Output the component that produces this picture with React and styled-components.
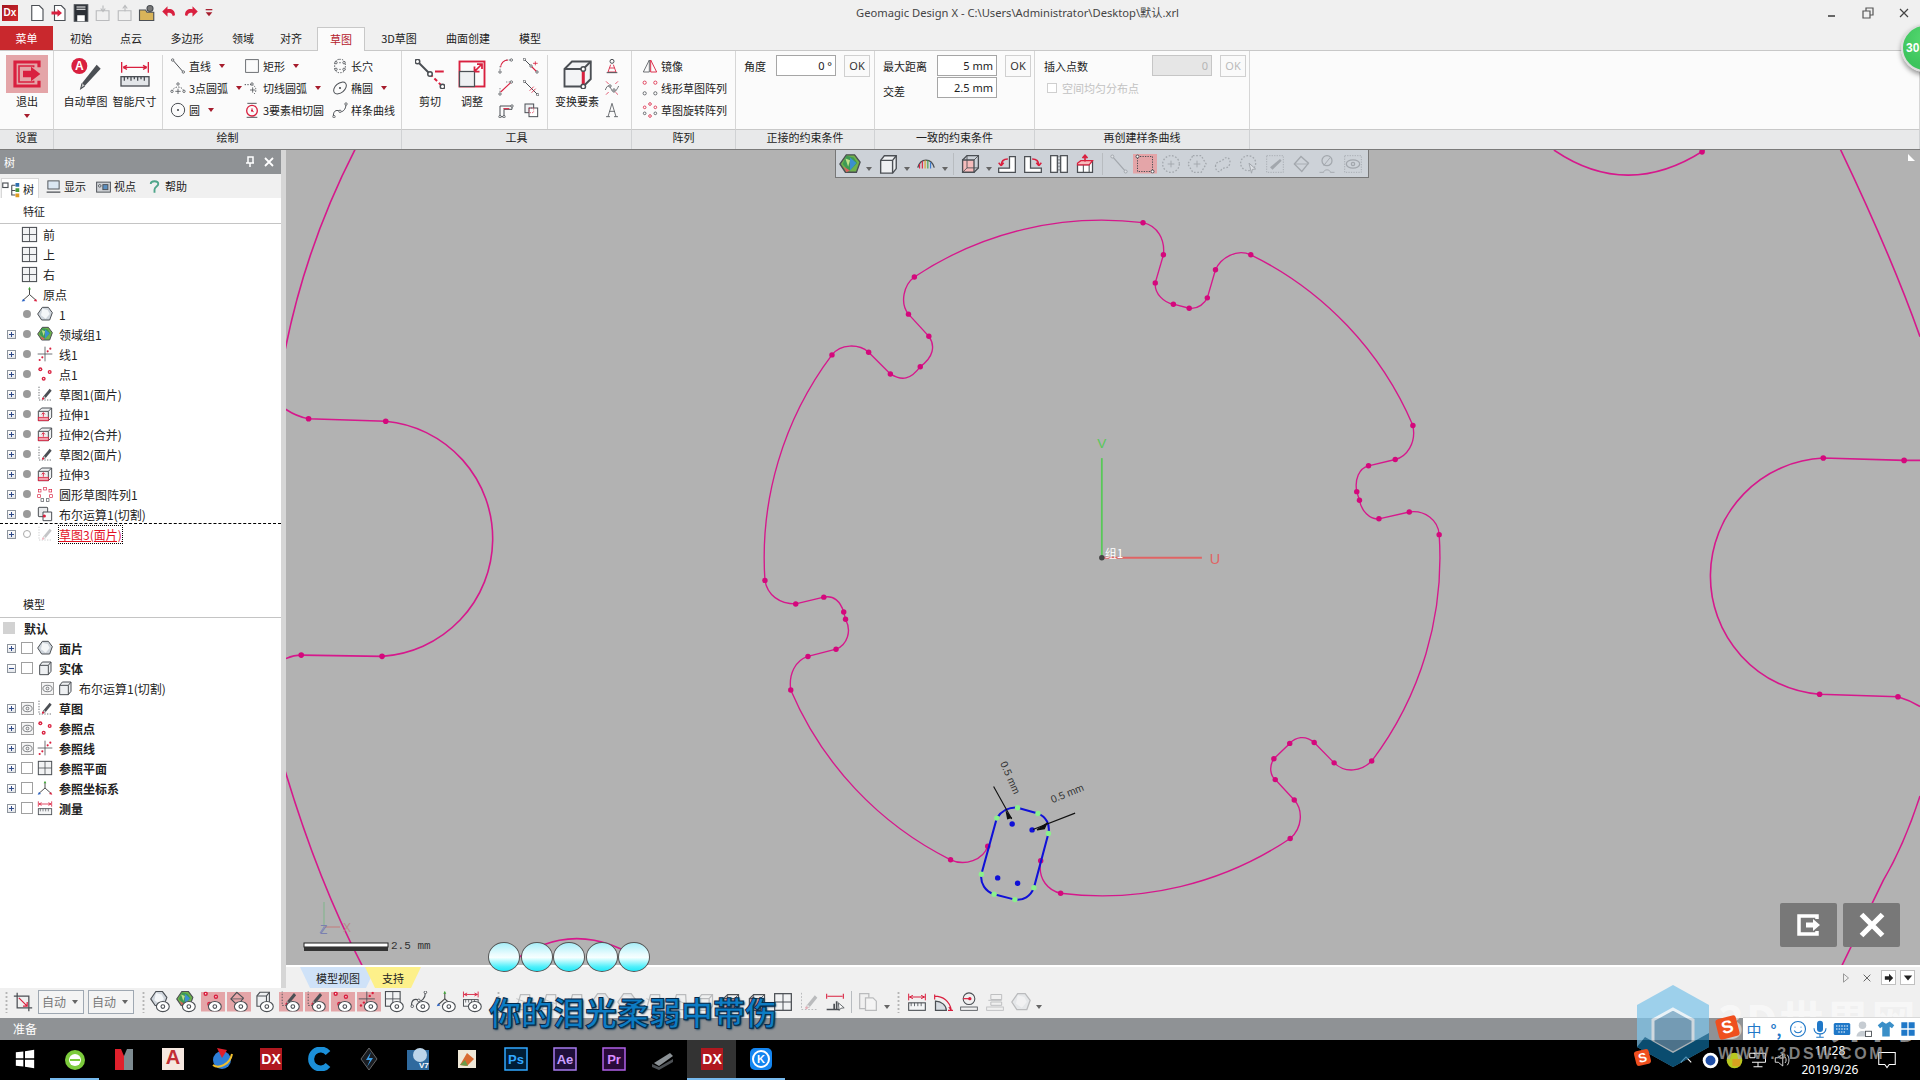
import React from 'react';
import styled, { createGlobalStyle } from 'styled-components';

const D = '#4b4f54';
const R = '#d9203f';
const PINK = '#d6188c';

const Global = createGlobalStyle`
  html, body { margin: 0; padding: 0; background: #f0f0f0; overflow: hidden; }
  body { font-family: "Noto Sans CJK SC", "Noto Sans", sans-serif; font-size: 12px; color: #222; }
  * { box-sizing: border-box; }
`;

const Window = styled.div`
  position: relative;
  width: 1920px;
  height: 1080px;
  display: flex;
  flex-direction: column;
  overflow: hidden;
  background: #f0f0f0;
`;

/* ---------- icons ---------- */
const Glyph = styled.svg`
  display: block;
  flex: none;
  width: ${p => p.$size}px;
  height: ${p => p.$size}px;
  fill: none;
  stroke: ${D};
  stroke-width: 1.5;
  opacity: ${p => (p.$dim ? 0.32 : 1)};
`;

const Node = ({ x, y, c = D, r = 1.8 }) => <circle cx={x} cy={y} r={r} fill="#fff" stroke={c} strokeWidth="1.2" />;
const Dot = ({ x, y, c = R, r = 1.6 }) => <circle cx={x} cy={y} r={r} fill={c} stroke="none" />;
const S = ({ d, c = R, w = 1.6, dash }) => <path d={d} stroke={c} strokeWidth={w} strokeDasharray={dash} fill="none" />;

const cube = (
  <>
    <path d="M4 8L8 3H21V17L17 22H4Z" fill="#eef0f2" />
    <path d="M4 8H17V22M17 8L21 3" />
  </>
);
const pencil = (
  <>
    <path d="M10 15L19 4L22 7L13 18Z" fill={D} stroke="none" />
    <path d="M10 15L9 19L13 18" fill="#ddd" strokeWidth="1" />
    <Dot x={9} y={19} />
  </>
);

const ICONS = {
  exit: (
    <>
      <path d="M21 7V3H3V21H21V17" stroke={R} strokeWidth="2.4" />
      <path d="M17 7V6H6V18H17V17" stroke={R} strokeWidth="1.2" />
      <path d="M9 9.5H15V6.5L22 12L15 17.5V14.5H9Z" fill={R} stroke="none" />
    </>
  ),
  autoSketch: (
    <>
      <path d="M9 19L20 5L23 8L11 21Z" fill={D} stroke="none" />
      <path d="M9 19L8 23L11 21" fill="#ccc" strokeWidth=".8" />
      <circle cx="7" cy="6" r="6" fill={R} stroke="none" />
      <text x="7" y="9" fontSize="9" fontWeight="700" fontFamily="Liberation Sans" textAnchor="middle" fill="#fff" stroke="none">A</text>
    </>
  ),
  smartDim: (
    <>
      <S d="M2 3V11M22 3V11M3 7H21M3 7L6 5.5M3 7L6 8.5M21 7L18 5.5M21 7L18 8.5" w={1} />
      <rect x="1.5" y="14" width="21" height="7" fill="#e3e6e9" strokeWidth="1" />
      <path d="M4 14V17M6.500 14V16M9 14V17M11.500 14V16M14 14V17M16.500 14V16M19 14V17" strokeWidth="1" />
    </>
  ),
  line: (<><path d="M5 4L19 20" /><Node x={4} y={3} /><Node x={20} y={21} /></>),
  arc3: (
    <>
      <path d="M3 17A9.500 9.500 0 0 1 21 17" strokeDasharray="2 2" />
      <path d="M12 13V21M8 17H16" strokeWidth="1.2" />
      <Node x={3} y={17} /><Node x={21} y={17} /><Node x={12} y={6} />
    </>
  ),
  circle: (<><circle cx="12" cy="12" r="10" /><Dot x={12} y={12} c={D} /></>),
  rect: <rect x="2.500" y="2.500" width="19" height="19" strokeWidth="1.2" />,
  tanArc: (
    <>
      <path d="M1 7H11" strokeDasharray="2 2" />
      <path d="M11 7A8 8 0 0 1 15 21" strokeDasharray="2 2" />
      <path d="M13 11V19M9 15H17" strokeWidth="1.2" />
      <Node x={12} y={6} />
    </>
  ),
  circle3: (
    <>
      <circle cx="12" cy="13" r="8" stroke={R} strokeWidth="2" />
      <path d="M5 2H19M4 23H20" strokeWidth="1.4" />
      <Dot x={12} y={13} />
      <path d="M12 9V13L15 15" stroke={R} strokeWidth="1" />
    </>
  ),
  slot: (
    <>
      <rect x="4" y="2" width="16" height="20" rx="7" strokeDasharray="2 2" />
      <Node x={6} y={7} /><Node x={18} y={7} /><Node x={6} y={17} /><Node x={18} y={17} />
      <Dot x={12} y={7} c={D} r={1} /><Dot x={12} y={17} c={D} r={1} />
    </>
  ),
  ellipse: (<><ellipse cx="12" cy="12" rx="11" ry="7" transform="rotate(-40 12 12)" /><Dot x={12} y={12} c={D} /></>),
  spline: (
    <>
      <path d="M2 21C2 11 9 12 12 14S21 12 21 3" />
      <Node x={3} y={22} /><Node x={12} y={14} /><Node x={21} y={3} />
    </>
  ),
  trim: (
    <>
      <path d="M3 3L12 12" /><S d="M12 12L21 21" dash="3 2" />
      <Node x={2} y={2} /><Node x={12} y={12} /><Node x={22} y={22} />
      <S d="M16 10H23" />
    </>
  ),
  adjust: (
    <>
      <rect x="2" y="2" width="20" height="20" stroke={R} />
      <rect x="2" y="10" width="12" height="12" fill="#eef0f2" strokeWidth="1" />
      <S d="M14 10L20 4M16 4H20V8M14 10V6M14 10H18" w={1.4} />
    </>
  ),
  fillet: (<><path d="M3 22V12M12 3H21" strokeDasharray="2 2" strokeWidth="1" /><S d="M4 14A11 11 0 0 1 15 3" /><Node x={3} y={21} /><Node x={20} y={3} /></>),
  chamfer: (<><path d="M3 22V12M12 3H21" strokeDasharray="2 2" strokeWidth="1" /><S d="M4 18L19 4" /><Node x={3} y={21} /><Node x={20} y={3} /></>),
  extendLine: (<><path d="M3 3L12 12" /><S d="M12 12L21 21" /><S d="M15 8H22M18.500 5V11" w={1.2} /><Node x={2} y={2} /><Node x={12} y={12} /><Node x={21} y={21} /></>),
  splitLine: (<><path d="M3 3L21 21" /><S d="M10 16L16 10M13 19L19 13" w={1.3} /><Node x={2} y={2} /><Node x={22} y={22} /></>),
  offset: (<><path d="M3 6H21V11H9V22H3Z" /><S d="M8 10H17" /><Node x={21} y={6} /><Node x={9} y={22} /><Node x={3} y={22} /></>),
  overlap: (<><rect x="3" y="3" width="13" height="13" fill="#eef0f2" /><rect x="9" y="9" width="13" height="13" fill="#fff" /><path d="M9 9H16V16H9Z" stroke={R} strokeDasharray="1.500 1.500" strokeWidth="1" /></>),
  transform: (
    <>
      <path d="M2 8L8 2H23V16L17 22H2Z" fill="#f3f4f6" />
      <path d="M2 8H17V22M17 8L23 2" />
      <S d="M17 8V22" w={2.4} />
      <Node x={17} y={8} /><Node x={17} y={22} />
    </>
  ),
  dimPoint: (<><circle cx="12" cy="5" r="3" /><S d="M8 15H16M10 10L6 21H18L14 10" w={1.3} /><path d="M4 22H20" /></>),
  dimFit: (<><path d="M2 15C5 7 8 7 11 14S17 19 22 9" strokeWidth="1.2" /><Node x={9} y={9} /><Node x={15} y={15} /><S d="M3 2L7 6M21 2L17 6M3 22L7 18M21 22L17 18" w={1.1} /></>),
  text: <path d="M3 22H9M15 22H21M6 22L12 2L18 22M8 14H16" strokeWidth="1.2" />,
  mirror: (<><path d="M11 3L2 21H11Z" strokeWidth="1.2" /><path d="M13 3L22 21H13Z" stroke={R} strokeWidth="1.4" /></>),
  linPattern: (<><Node x={4} y={4} c={R} r={2.4} /><Node x={20} y={4} c={R} r={2.4} /><Node x={4} y={20} r={2.4} /><Node x={20} y={20} r={2.4} /></>),
  rotPattern: (<><Node x={12} y={3} c={R} r={2} /><Node x={20} y={8} c={R} r={2} /><Node x={20} y={17} r={2} /><Node x={12} y={21} c={R} r={2} /><Node x={4} y={17} r={2} /><Node x={4} y={8} c={R} r={2} /></>),
  mesh: (<><path d="M8 2H17L23 10L19 21H7L1 12Z" fill="#cfd5dc" /><path d="M8 4L16 6L19 12L13 19L6 14Z" fill="#f4f6f8" stroke="none" /></>),
  region: (
    <>
      <path d="M8 2H17L23 10L19 21H7L1 12Z" fill="#6fb24b" />
      <path d="M8 3L16 5L20 11L11 20L4 12Z" fill="#3f9a55" stroke="none" />
      <path d="M12 5L19 11L12 19Z" fill="#3c8fd0" stroke="none" />
      <path d="M5 15L12 19L8 21Z" fill="#d9605f" stroke="none" />
      <path d="M7 6L12 8L10 15Z" fill="#bfe08a" stroke="none" />
    </>
  ),
  refLine: (<><path d="M12 1V23M1 12H23" strokeWidth="1.2" /><Dot x={4} y={21} /><Dot x={8} y={17} /><Dot x={16} y={8} /><Dot x={20} y={4} /></>),
  refPoint: (<><circle cx="5" cy="5" r="3" fill={R} stroke="none" /><circle cx="19" cy="9" r="3" fill={R} stroke="none" /><circle cx="10" cy="19" r="3" fill={R} stroke="none" /><Dot x={5} y={5} c="#fff" r={1} /><Dot x={19} y={9} c="#fff" r={1} /><Dot x={10} y={19} c="#fff" r={1} /></>),
  sketch: (<><path d="M3 1V21H23" strokeDasharray="2 2" strokeWidth="1.2" />{pencil}</>),
  extrude: (
    <>
      <path d="M2 8L7 3H22V17L17 22H2Z" fill="#eef0f2" />
      <path d="M2 8H17V22M17 8L22 3" />
      <rect x="2" y="17" width="15" height="5" fill="#f0a0ae" stroke={R} strokeWidth="1.200" />
      <S d="M9.500 16V10M7 12.500L9.500 10L12 12.500" w={1.4} />
    </>
  ),
  pattern: (<><rect x="10" y="2" width="4" height="4" stroke={R} strokeWidth="1" /><rect x="18" y="5" width="4" height="4" stroke={R} strokeWidth="1" /><rect x="2" y="5" width="4" height="4" stroke={R} strokeWidth="1" /><rect x="1" y="13" width="4" height="4" stroke={R} strokeWidth="1" /><rect x="19" y="13" width="4" height="4" stroke={R} strokeWidth="1" /><rect x="6" y="19" width="4" height="4" strokeWidth="1" /><rect x="14" y="19" width="4" height="4" strokeWidth="1" /></>),
  boolean: (<><rect x="2" y="2" width="14" height="14" rx="1" fill="#e8eaec" /><path d="M9 9H22V22H9Z" fill="#f6f7f8" /><Dot x={11} y={15} r={2.400} /></>),
  solid: cube,
  plane: (<><rect x="2" y="2" width="20" height="20" fill="#f2f3f4" /><path d="M12 2V22M2 12H22" strokeWidth="1.2" /></>),
  origin: (
    <>
      <S d="M12 12V4" c="#444" w={1.4} /><S d="M12 12L3 20" c="#444" w={1.4} /><S d="M12 12L21 20" c="#444" w={1.4} />
      <path d="M12 1L10 5H14Z" fill="#3fa535" stroke="none" />
      <path d="M1 22L6 21L3 18Z" fill="#2a62c4" stroke="none" />
      <path d="M23 22L18 21L21 18Z" fill={R} stroke="none" />
    </>
  ),
  measure: (
    <>
      <S d="M2 2V10M22 2V10M3 6H21M3 6L7 4M3 6L7 8M21 6L17 4M21 6L17 8" w={1.2} />
      <rect x="2" y="13" width="20" height="9" fill="#f4f5f6" strokeWidth="1.300" />
      <path d="M5 13V17M9 13V17M13 13V17M17 13V17" strokeWidth="1" />
    </>
  ),
  measureAngle: (<><S d="M2 3V9M2 5C12 5 20 11 22 22M18 22H24M22 22L19 18" w={1.4} /><path d="M3 11V22H16C16 16 10 11 3 11Z" fill="#d7dce2" /></>),
  measureDev: (<><circle cx="12" cy="8" r="7" strokeWidth="1.300" /><S d="M5 8H12" w={1.4} /><Dot x={13} y={8} r={2} /><rect x="2" y="18" width="20" height="4" strokeWidth="1" /></>),
  measureSec: (<><path d="M7 3H20V9H7ZM4 10H20M7 12H20V16H7Z" strokeWidth="1.100" /><rect x="2" y="18" width="20" height="4" strokeWidth="1" /></>),
  pasteDoc: (<><path d="M2 2H13V20H2Z" /><path d="M9 7H18L22 11V22H9Z" fill="#fff" /></>),
  dimCursor: (<><S d="M2 2V8M22 2V8M3 5H21" w={1.3} /><path d="M2 21H18M11 21V14M14 21V11" strokeWidth="2" /><path d="M16 13L23 19L19 19.500L17 22Z" fill="#fff" strokeWidth="1" /></>),
  revolve: (<><path d="M3 16C6 5 18 5 21 16" /><path d="M5 17V12M8 17V9" stroke={R} strokeWidth="1.200" /><path d="M11 17V8" stroke="#e0a020" strokeWidth="1.200" /><path d="M14 17V8" stroke="#45a545" strokeWidth="1.200" /><path d="M17 17V10" stroke="#3a7ad0" strokeWidth="1.200" /></>),
  frontBox: (<><path d="M3 8L8 3H21V17L16 22H3Z" /><path d="M3 8H16V22H3Z" fill="#f6bcbc" /><path d="M16 8L21 3M8 3V17H21M8 17L3 22" strokeWidth="1" /></>),
  rotL: (<><path d="M2 22V17H15V3H22V22Z" fill="#fff" /><S d="M5 14C5 8 9 6 13 6M5 14L2 10.500M5 14L8 10.500" w={1.8} /></>),
  rotR: (<><path d="M2 3H9V17H22V22H2Z" fill="#fff" /><S d="M19 14C19 8 15 6 11 6M19 14L16 10.500M19 14L22 10.500" w={1.800} /></>),
  split: (<><rect x="2" y="2" width="8" height="20" fill="#fff" /><rect x="14" y="2" width="8" height="20" fill="#fff" /><path d="M12 2V22" strokeDasharray="2 2" strokeWidth="1" /></>),
  lift: (<><path d="M3 13L7 9H21V22H3Z" fill="#fff" /><path d="M3 13H17V22M10 13V22" strokeWidth="1.200" /><path d="M3 11L7 8H21L17 13H3Z" fill="#f6bcbc" stroke={R} /><path d="M12 9V2M9 5L12 1.500L15 5" stroke={R} strokeWidth="2" /></>),
  dashRect: (<><rect x="3" y="3" width="18" height="18" strokeDasharray="1.500 1.500" strokeWidth="1.200" /><Node x={3} y={3} /><Node x={21} y={21} /></>),
  dashCircle: (<><circle cx="12" cy="12" r="10" strokeDasharray="2 2" /><path d="M12 8V16M8 12H16" strokeWidth="1.100" /></>),
  dashHex: (<><path d="M7 2H17L23 12L17 22H7L1 12Z" strokeDasharray="2 2" /><path d="M12 8V16M8 12H16" strokeWidth="1.100" /></>),
  dashBlob: (<path d="M3 15C3 8 10 10 13 6S22 5 20 12S12 15 10 19S3 21 3 15Z" strokeDasharray="2 2" />),
  dashCursor: (<><circle cx="11" cy="11" r="9" strokeDasharray="2 2" /><path d="M12 11L20 18L16 18.500L15 23Z" fill="#fff" strokeWidth="1.200" /></>),
  dashPen: (<><rect x="2" y="2" width="20" height="20" strokeDasharray="1.500 1.500" strokeWidth="1" /><path d="M6 16L18 6L20 8L9 19Z" fill={D} stroke="none" /></>),
  bucket: (<><path d="M4 12L12 3L21 11L13 21Z" /><path d="M4 12H21" strokeWidth="1" /></>),
  person: (<><circle cx="12" cy="8" r="6" /><path d="M3 22H8C8 18 16 18 16 22H21M8 14L16 4" strokeWidth="1.100" /></>),
  eyeBox: (<><rect x="2" y="2" width="20" height="20" strokeDasharray="1.500 1.500" strokeWidth="1" /><ellipse cx="12" cy="12" rx="8" ry="5" /><circle cx="12" cy="12" r="2" /></>),
  cropTool: (<><path d="M5 1V19H23M1 5H19V23" strokeWidth="1.500" /><S d="M7 7L17 17M17 12V17H12" w={1.500} /></>),
  cap: (<><path d="M4 21L9 3H20L21 21Z" /><path d="M4 8L20 14" strokeWidth="1" /></>),
};

const Icon = ({ name, size = 16, dim }) => (
  <Glyph viewBox="0 0 24 24" $size={size} $dim={dim}>{ICONS[name]}</Glyph>
);

// a base icon with the small eye that the visibility buttons carry
const VisIcon = ({ name, size = 22, dim }) => (
  <Glyph viewBox="0 0 24 24" $size={size} $dim={dim}>
    <g transform="translate(0 -1) scale(.8)">{ICONS[name]}</g>
    <ellipse cx="14" cy="17" rx="7" ry="5.500" fill="#fff" strokeWidth="1.200" />
    <circle cx="14" cy="17" r="2" strokeWidth="1.200" />
  </Glyph>
);

const Caret = styled.i`
  display: inline-block;
  flex: none;
  width: 0;
  height: 0;
  border-left: 3.5px solid transparent;
  border-right: 3.5px solid transparent;
  border-top: 4px solid ${p => p.$grey ? '#666' : '#a61c2c'};
`;

/* ---------- title bar ---------- */
const TitleBar = styled.div`
  height: 26px;
  display: flex;
  align-items: center;
`;
const DxLogo = styled.div`
  width: 16px;
  height: 16px;
  margin: 0 8px 0 2px;
  background: linear-gradient(135deg, #a3161f, #d42a2f);
  color: #fff;
  font: 700 10px "Liberation Sans", sans-serif;
  line-height: 16px;
  text-align: center;
`;
const QatSlot = styled.div`
  width: ${p => p.$w || 22}px;
  display: flex;
  justify-content: center;
  align-items: center;
`;
const Title = styled.div`
  margin-left: 640px;
  padding-bottom: 3px;
  font: 11.2px "Noto Sans", "Noto Sans CJK SC", sans-serif;
  color: #444;
  white-space: nowrap;
`;
const WinButtons = styled.div`
  margin-left: auto;
  display: flex;
  align-items: flex-start;
  padding-right: 10px;
  gap: 24px;
`;

/* ---------- tabs ---------- */
const TabRow = styled.div`
  height: 25px;
  display: flex;
  align-items: stretch;
  border-bottom: 1px solid #c8c8c8;
  font-size: 11px;
`;
const MenuTab = styled.div`
  width: 53px;
  background: #c9282d;
  color: #fff;
  display: flex;
  align-items: center;
  justify-content: center;
  padding-bottom: 1px;
`;
const Tab = styled.div`
  width: ${p => p.$w}px;
  display: flex;
  align-items: center;
  justify-content: center;
  white-space: nowrap;
  padding-bottom: 1px;
  ${p => p.$active && `
    color: #b4202c;
    background: #fbfbfb;
    border: 1px solid #c8c8c8;
    border-bottom: 0;
    margin-top: 1px;
    margin-bottom: -1px;
    padding-bottom: 2px;
  `}
`;

/* ---------- ribbon ---------- */
const Ribbon = styled.div`
  height: 98px;
  display: flex;
  font-size: 11px;
`;
const Group = styled.div`
  width: ${p => p.$w}px;
  flex: ${p => (p.$w ? 'none' : 1)};
  display: flex;
  flex-direction: column;
`;
const GroupBody = styled.div`
  height: 79px;
  background: #fbfbfb;
  border-bottom: 1px solid #c8c8c8;
  border-right: 1px solid #d6d6d6;
  padding-top: 4px;
  display: ${p => (p.$form ? 'block' : 'flex')};
  padding-left: ${p => p.$pad || 0}px;
`;
const GroupLabel = styled.div`
  height: 19px;
  background: #e8e9ea;
  border-right: 1px solid #d0d2d4;
  text-align: center;
  line-height: 14px;
  white-space: nowrap;
`;
const BigButton = styled.div`
  width: ${p => p.$w}px;
  flex: none;
  display: flex;
  flex-direction: column;
  align-items: center;
  white-space: nowrap;
`;
const BigIconBox = styled.div`
  width: ${p => p.$box || 42}px;
  height: 38px;
  display: flex;
  align-items: center;
  justify-content: center;
  background: ${p => (p.$on ? '#e4a5a8' : 'transparent')};
  margin-bottom: 1px;
`;
const BigLabel = styled.div`
  line-height: 14px;
`;
const SmallCol = styled.div`
  width: ${p => p.$w}px;
  flex: none;
  display: flex;
  flex-direction: column;
`;
const SmallRow = styled.div`
  height: 22px;
  display: flex;
  align-items: center;
  gap: 3px;
  white-space: nowrap;
`;
const CaretGap = styled.i`
  display: block;
  width: 2px;
`;
const VSep = styled.div`
  width: 1px;
  height: 74px;
  flex: none;
  background: #d6d6d6;
  margin: 0 ${p => p.$mr || 7}px 0 ${p => p.$ml || 3}px;
`;
const IconGrid = styled.div`
  width: 50px;
  flex: none;
  display: grid;
  grid-template-columns: 25px 25px;
  grid-auto-rows: 22px;
  place-items: center;
`;
const FormRow = styled.div`
  display: flex;
  align-items: flex-start;
  height: 22px;
`;
const FormLabel = styled.div`
  width: ${p => p.$w}px;
  flex: none;
  line-height: ${p => p.$lh || 22}px;
`;
const ValueBox = styled.div`
  width: 60px;
  height: 21px;
  flex: none;
  border: 1px solid ${p => (p.$off ? '#c6c6c6' : '#a6a6a6')};
  background: ${p => (p.$off ? '#e6e6e6' : '#fff')};
  color: ${p => (p.$off ? '#b5b5b5' : '#222')};
  text-align: right;
  padding-right: 3px;
  line-height: 19px;
  font-family: "Noto Sans", sans-serif;
`;
const OkButton = styled.div`
  width: 26px;
  height: 22px;
  margin-left: 8px;
  flex: none;
  border: 1px solid #d0d0d0;
  background: #fafafa;
  color: ${p => (p.$off ? '#bbb' : '#333')};
  text-align: center;
  line-height: 19px;
  font-family: "Noto Sans", sans-serif;
`;
const CheckLine = styled.div`
  display: flex;
  align-items: center;
  gap: 5px;
  color: #c2c2c2;
  margin: 3px 0 0 3px;
`;
const CheckBox = styled.i`
  display: block;
  flex: none;
  width: ${p => p.$s || 10}px;
  height: ${p => p.$s || 10}px;
  background: #fff;
  border: 1px solid ${p => p.$c || '#cfcfcf'};
`;

/* ---------- tree panel ---------- */
const Main = styled.div`
  height: 839px;
  display: flex;
  border-top: 1px solid #7a7a7a;
`;
const TreePanel = styled.div`
  width: 286px;
  flex: none;
  background: #fff;
  border-right: 5px solid #d6d6d6;
  display: flex;
  flex-direction: column;
`;
const PanelHead = styled.div`
  height: 24px;
  background: #8f9295;
  color: #fff;
  display: flex;
  align-items: center;
  padding: 0 6px 0 4px;
  font-size: 11px;
`;
const PanelTabs = styled.div`
  height: 24px;
  background: #f0f0f0;
  display: flex;
  align-items: flex-end;
  font-size: 11px;
`;
const PanelTab = styled.div`
  height: ${p => (p.$active ? 20 : 24)}px;
  width: ${p => p.$w}px;
  margin-left: ${p => p.$ml || 0}px;
  flex: none;
  display: flex;
  align-items: center;
  gap: 3px;
  ${p => p.$active && 'background:#fff;border:1px solid #d8d8d8;border-bottom:0;'}
`;
const SectionHead = styled.div`
  height: ${p => p.$h || 27}px;
  margin-top: ${p => p.$mt || 0}px;
  border-bottom: 1px solid #c4c4c4;
  padding-left: 23px;
  line-height: 27px;
  font-size: 11px;
`;
const TreeRow = styled.div`
  height: 20px;
  display: flex;
  align-items: center;
  padding-left: ${p => p.$pad}px;
  font-weight: ${p => (p.$bold ? 700 : 400)};
  white-space: nowrap;
  ${p => p.$dashed && 'height:21px;margin-top:-1px;border-top:1px dashed #000;'}
`;
const Slot = styled.div`
  width: ${p => p.$w}px;
  flex: none;
  display: flex;
  align-items: center;
  justify-content: center;
`;
const Expander = styled.i`
  display: block;
  position: relative;
  width: 9px;
  height: 9px;
  border: 1px solid #8d949c;
  background: linear-gradient(#fff, #e4e6ea);
  &::before { content: ""; position: absolute; left: 1px; right: 1px; top: 3px; height: 1px; background: #2f4a8a; }
  ${p => !p.$open && '&::after { content: ""; position: absolute; top: 1px; bottom: 1px; left: 3px; width: 1px; background: #2f4a8a; }'}
`;
const StateDot = styled.i`
  display: block;
  width: 8px;
  height: 8px;
  border-radius: 50%;
  background: ${p => (p.$off ? 'transparent' : '#9a9a9a')};
  ${p => p.$off && 'border: 1.5px solid #aaa;'}
`;
const RowLabel = styled.span`
  margin-left: 4px;
  ${p => p.$selected && 'color:#e3101f;text-decoration:underline;outline:1px dotted #000;'}
`;
const DefaultSwatch = styled.i`
  display: block;
  width: 12px;
  height: 12px;
  margin: 0 9px 0 3px;
  background: #d2d2d2;
`;
const EyeBoxWrap = styled.div`
  width: 13px;
  height: 13px;
  border: 1px solid #a0a0a0;
  background: #f4f4f4;
  display: flex;
  align-items: center;
  justify-content: center;
`;

const EyeBox = () => (
  <EyeBoxWrap>
    <Glyph viewBox="0 0 24 24" $size={11}>
      <ellipse cx="12" cy="12" rx="10" ry="7" />
      <circle cx="12" cy="12" r="3" />
    </Glyph>
  </EyeBoxWrap>
);

/* ---------- canvas ---------- */
const RightColumn = styled.div`
  flex: 1;
  display: flex;
  flex-direction: column;
  min-width: 0;
`;
const Canvas = styled.div`
  position: relative;
  flex: 1;
  background: #b2b2b2;
  border-bottom: 2px solid #fff;
`;
const Drawing = styled.svg`
  display: block;
  width: 100%;
  height: 100%;
  fill: none;
`;
const ViewBar = styled.div`
  position: absolute;
  left: 549px;
  top: 0;
  width: 534px;
  height: 28px;
  display: flex;
  align-items: center;
  background: #cdd2d8;
  border: 1px solid #777;
  border-top: 0;
`;
const ToolSlot = styled.div`
  width: ${p => p.$w || 26}px;
  height: ${p => p.$h || 20}px;
  flex: none;
  display: flex;
  align-items: ${p => (p.$low ? 'flex-end' : 'center')};
  justify-content: center;
  padding-bottom: ${p => (p.$low ? 3 : 0)}px;
  box-shadow: ${p => (p.$on ? 'inset 0 0 0 20px #e4a5a8' : 'none')};
  clip-path: ${p => (p.$on ? 'inset(0 1px)' : 'none')};
`;
const ToolSep = styled.div`
  width: ${p => p.$w || 8}px;
  height: 22px;
  flex: none;
  background: linear-gradient(#b8bcc0, #b8bcc0) center / 1px 100% no-repeat;
`;
const Grip = styled.div`
  width: ${p => p.$w || 12}px;
  height: 22px;
  flex: none;
  background: radial-gradient(circle, #b5b5b5 1px, transparent 1.2px) center top / 3px 4px repeat-y;
`;
const CornerMark = styled.i`
  position: absolute;
  right: 5px;
  top: 4px;
  width: 0;
  height: 0;
  border-bottom: 7px solid #fff;
  border-left: 7px solid transparent;
  transform: scaleX(-1);
`;
const ExitGroup = styled.div`
  position: absolute;
  right: 20px;
  bottom: 18px;
  display: flex;
  gap: 6px;
`;
const ExitButton = styled.div`
  width: 57px;
  height: 44px;
  border-radius: 2px;
  background: #787878;
  display: flex;
  align-items: center;
  justify-content: center;
`;
const Bubbles = styled.div`
  position: absolute;
  left: 202px;
  top: 792px;
  display: flex;
  gap: 0.6px;
`;
const Bubble = styled.i`
  display: block;
  width: 32px;
  height: 30px;
  border-radius: 50%;
  border: 1px solid #555;
  background: linear-gradient(#a8eef8, #eafcfe 40%, #f6ffff 52%, #4ef0fb 85%, #22e8f8);
`;

/* ---------- view tabs strip ---------- */
const ViewStrip = styled.div`
  height: 21px;
  flex: none;
  display: flex;
  align-items: stretch;
  padding-left: 14px;
  font-size: 11px;
`;
const ViewTab = styled.div`
  width: ${p => p.$w}px;
  flex: none;
  display: flex;
  align-items: center;
  justify-content: center;
  background: ${p => p.$bg};
  clip-path: polygon(0 0, 100% 0, calc(100% - 10px) 100%, 10px 100%);
  margin-left: ${p => p.$ml || 0}px;
`;
const StripRight = styled.div`
  margin-left: auto;
  display: flex;
  align-items: center;
  gap: 4px;
  padding-right: 5px;
`;
const StripBox = styled.div`
  width: 15px;
  height: 15px;
  background: #fff;
  border: 1px solid #c0c0c0;
  display: flex;
  align-items: center;
  justify-content: center;
  color: #222;
  font-size: 10px;
  line-height: 1;
`;

/* ---------- bottom bars ---------- */
const BottomBar = styled.div`
  height: 30px;
  flex: none;
  display: flex;
  align-items: center;
  background: #f0f0f0;
  padding-bottom: 3px;
`;
const Combo = styled.div`
  width: 46px;
  height: 24px;
  margin-left: 4px;
  flex: none;
  border: 1px solid #9fa8b2;
  background: #f4f4f4;
  color: #777;
  display: flex;
  align-items: center;
  justify-content: space-between;
  padding: 0 5px 0 3px;
`;
const StatusBar = styled.div`
  height: 22px;
  flex: none;
  background: #8f9295;
  color: #fff;
  padding-left: 13px;
  line-height: 22px;
`;
const Taskbar = styled.div`
  height: 40px;
  flex: none;
  background: #000;
  display: flex;
`;
const TaskSlot = styled.div`
  width: ${p => p.$w || 49}px;
  flex: none;
  display: flex;
  align-items: center;
  justify-content: center;
  background: ${p => (p.$active ? '#333' : 'transparent')};
  border-bottom: 2px solid ${p => (p.$run ? '#76b9ed' : 'transparent')};
`;
const TaskIcon = styled.svg`
  display: block;
  width: 24px;
  height: 24px;
`;
const Tray = styled.div`
  margin-left: auto;
  width: 289px;
  display: flex;
  align-items: center;
  color: #fff;
`;
const TrayCell = styled.div`
  width: ${p => p.$w || 24}px;
  flex: none;
  display: flex;
  align-items: center;
  justify-content: center;
`;
const Clock = styled.div`
  width: 72px;
  flex: none;
  text-align: center;
  line-height: 19px;
  font-family: "Noto Sans", sans-serif;
  font-size: 12px;
  white-space: nowrap;
`;

/* ---------- overlays ---------- */
const Caption = styled.div`
  position: absolute;
  left: 489px;
  top: 993px;
  font: 700 32px/36px "Noto Sans CJK SC", sans-serif;
  color: #0d7cc4;
  -webkit-text-stroke: 1px #062a4a;
  text-shadow: 1px 1px 2px #06304f;
  white-space: nowrap;
`;
const Badge = styled.div`
  position: absolute;
  left: 1901px;
  top: 24px;
  width: 48px;
  height: 48px;
  border-radius: 50%;
  border: 2px solid #ddd;
  background: radial-gradient(circle at 50% 30%, #55d870, #3cc45c 70%);
  box-shadow: 0 3px 5px rgba(0, 0, 0, .4);
  color: #fff;
  font: 700 12px/44px "Liberation Sans", sans-serif;
  padding-left: 3px;
`;
const ImeBar = styled.div`
  position: absolute;
  left: 1743px;
  top: 1017px;
  width: 177px;
  height: 23px;
  background: #fff;
  border-top: 1px solid #d8d8d8;
  display: flex;
  align-items: center;
`;
const ImeCell = styled.div`
  width: 22px;
  flex: none;
  display: flex;
  align-items: center;
  justify-content: center;
  color: #1f78c8;
  font-size: 15px;
  line-height: 1;
`;
const SogouMark = styled.div`
  position: absolute;
  left: ${p => p.$x}px;
  top: ${p => p.$y}px;
  width: ${p => p.$s}px;
  height: ${p => p.$s}px;
  background: #ef4f1e;
  border-radius: 3px;
  transform: rotate(-14deg);
  color: #fff;
  font: 700 ${p => p.$s * 0.85}px/${p => p.$s}px "Liberation Sans", sans-serif;
  text-align: center;
`;
const WatermarkLogo = styled.svg`
  position: absolute;
  left: 1637px;
  top: 985px;
  width: 72px;
  height: 82px;
  opacity: .72;
`;
const WatermarkTitle = styled.div`
  position: absolute;
  left: 1718px;
  top: 994px;
  font: 700 44px/50px "Noto Sans CJK SC", sans-serif;
  letter-spacing: 2px;
  color: rgba(255, 255, 255, .55);
  white-space: nowrap;
`;
const WatermarkUrl = styled.div`
  position: absolute;
  left: 1718px;
  top: 1044px;
  font: 700 16px/20px "Liberation Sans", sans-serif;
  letter-spacing: 2.6px;
  color: rgba(170, 170, 170, .75);
  white-space: nowrap;
`;

/* ---------- data ---------- */
const FEATURE_ROWS = [
  { icon: 'plane', label: '前', plain: true },
  { icon: 'plane', label: '上', plain: true },
  { icon: 'plane', label: '右', plain: true },
  { icon: 'origin', label: '原点', plain: true },
  { icon: 'mesh', label: '1', noExp: true },
  { icon: 'region', label: '领域组1' },
  { icon: 'refLine', label: '线1' },
  { icon: 'refPoint', label: '点1' },
  { icon: 'sketch', label: '草图1(面片)' },
  { icon: 'extrude', label: '拉伸1' },
  { icon: 'extrude', label: '拉伸2(合并)' },
  { icon: 'sketch', label: '草图2(面片)' },
  { icon: 'extrude', label: '拉伸3' },
  { icon: 'pattern', label: '圆形草图阵列1' },
  { icon: 'boolean', label: '布尔运算1(切割)' },
];

const MODEL_ROWS = [
  { icon: 'mesh', label: '面片' },
  { icon: 'solid', label: '实体', open: true },
  { icon: 'solid', label: '布尔运算1(切割)', child: true },
  { icon: 'sketch', label: '草图', eye: true },
  { icon: 'refPoint', label: '参照点', eye: true },
  { icon: 'refLine', label: '参照线', eye: true },
  { icon: 'plane', label: '参照平面' },
  { icon: 'origin', label: '参照坐标系' },
  { icon: 'measure', label: '测量' },
];

const GEAR = 'M868 28C900 35 917 65 913 99L895 161C893 185 915 205 935 208L970 217C990 220 1005 205 1010 194L1028 132C1040 105 1075 85 1106 99A745 745 0 0 1 1464 476C1472 515 1450 545 1425 551L1366 565C1345 570 1335 595 1340 622L1346 641C1350 665 1370 685 1389 682L1456 667C1490 662 1520 685 1522 717A745 745 0 0 1 1373 1217C1350 1240 1315 1245 1290 1221L1246 1176C1225 1158 1205 1165 1192 1178L1157 1212C1145 1230 1150 1250 1160 1258L1202 1303C1222 1325 1220 1365 1193 1388A745 745 0 0 1 686 1509C660 1503 635 1480 642 1437M525 1405C515 1435 475 1450 443 1435A745 745 0 0 1 90 1060C85 1025 100 995 128 986L190 970C215 960 225 930 211 904L207 888C200 865 185 850 163 855L101 870C65 870 38 850 33 818A745 745 0 0 1 181 320C200 295 240 295 262 314L310 362C335 378 355 375 376 346C405 325 410 300 395 279L350 230C330 205 340 165 363 148A745 745 0 0 1 868 28';
const GEAR_NODES = [[868, 28], [913, 99], [895, 161], [935, 208], [970, 217], [1010, 194], [1028, 132], [1106, 99], [1464, 476], [1425, 551], [1366, 565], [1340, 622], [1346, 641], [1389, 682], [1456, 667], [1522, 717], [1373, 1217], [1290, 1221], [1246, 1176], [1192, 1178], [1157, 1212], [1160, 1258], [1202, 1303], [1193, 1388], [686, 1509], [642, 1437], [525, 1405], [443, 1435], [90, 1060], [128, 986], [190, 970], [211, 904], [207, 888], [163, 855], [101, 870], [33, 818], [181, 320], [262, 314], [310, 362], [376, 346], [395, 279], [350, 230], [363, 148]];
const SLOT = 'M545 1343C555 1328 572 1318 591 1320L636 1333C655 1340 663 1358 659 1377L627 1497C620 1515 603 1526 585 1523L539 1511C520 1505 508 1487 511 1467Z';
const SLOT_GREEN = [[545, 1343], [591, 1320], [636, 1333], [659, 1377], [627, 1497], [585, 1523], [539, 1511], [511, 1467]];
const SLOT_BLUE = [[579, 1356], [623, 1369], [547, 1475], [591, 1487]];
const SIDE_NODES = [[252, 342], [315, 344], [312, 536], [246, 535], [1555, 376], [1489, 374], [1486, 567], [1550, 569], [1390, 124]];

const TaskLetter = ({ bg, fg, txt, size = 13, border }) => (
  <TaskIcon viewBox="0 0 24 24">
    <rect x="1" y="1" width="22" height="22" fill={bg} stroke={border || 'none'} strokeWidth="1.500" />
    <text x="12" y="17" textAnchor="middle" fontSize={size} fontWeight="700" fontFamily="Liberation Sans" fill={fg}>{txt}</text>
  </TaskIcon>
);

const TreeItem = ({ row }) => {
  if (row.plain) {
    return (
      <TreeRow $pad={19}>
        <Slot $w={20}><Icon name={row.icon} size={17} /></Slot>
        <RowLabel>{row.label}</RowLabel>
      </TreeRow>
    );
  }
  return (
    <TreeRow $pad={3}>
      <Slot $w={16}>{!row.noExp && <Expander />}</Slot>
      <Slot $w={16}><StateDot /></Slot>
      <Slot $w={20}><Icon name={row.icon} size={16} /></Slot>
      <RowLabel>{row.label}</RowLabel>
    </TreeRow>
  );
};

const ModelItem = ({ row }) => {
  if (row.child) {
    return (
      <TreeRow $pad={39}>
        <Slot $w={16}><EyeBox /></Slot>
        <Slot $w={20}><Icon name={row.icon} size={16} /></Slot>
        <RowLabel>{row.label}</RowLabel>
      </TreeRow>
    );
  }
  return (
    <TreeRow $pad={3} $bold>
      <Slot $w={16}><Expander $open={row.open} /></Slot>
      <Slot $w={16}>{row.eye ? <EyeBox /> : <CheckBox $s={12} $c="#a0a0a0" />}</Slot>
      <Slot $w={20}><Icon name={row.icon} size={16} /></Slot>
      <RowLabel>{row.label}</RowLabel>
    </TreeRow>
  );
};

const Tool = ({ name, w, on, dim, vis, size = 20 }) => (
  <ToolSlot $w={w} $on={on}>
    {vis ? <VisIcon name={name} dim={dim} /> : <Icon name={name} size={size} dim={dim} />}
  </ToolSlot>
);
const ToolCaret = () => <ToolSlot $w={10} $low><Caret $grey /></ToolSlot>;

export default function App() {
  return (
    <Window>
      <Global />
      <TitleBar>
        <DxLogo>Dx</DxLogo>
        <QatSlot><Glyph viewBox="0 0 24 24" $size={18}><path d="M5 2H15L20 7V22H5Z" fill="#fff" /></Glyph></QatSlot>
        <QatSlot><Glyph viewBox="0 0 24 24" $size={18}><path d="M6 2H15L20 7V22H6Z" fill="#fff" /><path d="M2 10H10V7L16 12L10 17V14H2Z" fill={R} stroke="none" /></Glyph></QatSlot>
        <QatSlot><Glyph viewBox="0 0 24 24" $size={18}><rect x="3" y="1" width="18" height="22" fill="#2c3036" /><path d="M6 4H18M6 7H18" stroke="#fff" strokeWidth="1.500" /><rect x="7" y="15" width="10" height="8" fill="#fff" stroke="none" /></Glyph></QatSlot>
        <QatSlot><Glyph viewBox="0 0 24 24" $size={18} $dim><path d="M3 9H20V22H3ZM12 2V10M9 6L12 10L15 6" /></Glyph></QatSlot>
        <QatSlot><Glyph viewBox="0 0 24 24" $size={18} $dim><path d="M3 9H20V22H3ZM12 10V2M9 6L12 2L15 6" /></Glyph></QatSlot>
        <QatSlot><Glyph viewBox="0 0 24 24" $size={18}><path d="M2 8H10L12 11H21V22H2Z" fill="#d9b45a" /><circle cx="16" cy="6" r="4" fill="#777" /></Glyph></QatSlot>
        <QatSlot><Glyph viewBox="0 0 24 24" $size={18}><path d="M20 15C20 8 15 6 10 7V3L3 10L10 17V12C13 11 16 12 17 16Z" fill={R} stroke="none" /></Glyph></QatSlot>
        <QatSlot><Glyph viewBox="0 0 24 24" $size={18}><path d="M4 15C4 8 9 6 14 7V3L21 10L14 17V12C11 11 8 12 7 16Z" fill={R} stroke="none" /></Glyph></QatSlot>
        <QatSlot $w={14}><Glyph viewBox="0 0 12 12" $size={10}><path d="M2 2H10" stroke="#a61c2c" /><path d="M2 5H10L6 10Z" fill="#a61c2c" stroke="none" /></Glyph></QatSlot>
        <Title>Geomagic Design X - C:\Users\Administrator\Desktop\默认.xrl</Title>
        <WinButtons>
          <Glyph viewBox="0 0 12 12" $size={12}><path d="M2 9H9" strokeWidth="2" stroke="#666" /></Glyph>
          <Glyph viewBox="0 0 12 12" $size={12}><path d="M1 4H8V11H1ZM4 4V1H11V8H8" strokeWidth="1.200" stroke="#555" /></Glyph>
          <Glyph viewBox="0 0 12 12" $size={12}><path d="M2 2L10 10M10 2L2 10" strokeWidth="1.200" stroke="#444" /></Glyph>
        </WinButtons>
      </TitleBar>

      <TabRow>
        <MenuTab>菜单</MenuTab>
        <Tab $w={56}>初始</Tab>
        <Tab $w={44}>点云</Tab>
        <Tab $w={68}>多边形</Tab>
        <Tab $w={44}>领域</Tab>
        <Tab $w={52}>对齐</Tab>
        <Tab $w={48} $active>草图</Tab>
        <Tab $w={68}>3D草图</Tab>
        <Tab $w={70}>曲面创建</Tab>
        <Tab $w={54}>模型</Tab>
      </TabRow>

      <Ribbon>
        <Group $w={54}>
          <GroupBody>
            <BigButton $w={54}>
              <BigIconBox $on><Icon name="exit" size={32} /></BigIconBox>
              <BigLabel>退出</BigLabel>
              <Caret style={{ marginTop: 6 }} />
            </BigButton>
          </GroupBody>
          <GroupLabel>设置</GroupLabel>
        </Group>

        <Group $w={348}>
          <GroupBody $pad={7}>
            <BigButton $w={49}>
              <BigIconBox><Icon name="autoSketch" size={32} /></BigIconBox>
              <BigLabel>自动草图</BigLabel>
            </BigButton>
            <BigButton $w={49}>
              <BigIconBox><Icon name="smartDim" size={32} /></BigIconBox>
              <BigLabel>智能尺寸</BigLabel>
            </BigButton>
            <VSep />
            <SmallCol $w={74}>
              <SmallRow><Icon name="line" />直线<CaretGap /><Caret /></SmallRow>
              <SmallRow><Icon name="arc3" />3点圆弧<CaretGap /><Caret /></SmallRow>
              <SmallRow><Icon name="circle" />圆<CaretGap /><Caret /></SmallRow>
            </SmallCol>
            <SmallCol $w={88}>
              <SmallRow><Icon name="rect" />矩形<CaretGap /><Caret /></SmallRow>
              <SmallRow><Icon name="tanArc" />切线圆弧<CaretGap /><Caret /></SmallRow>
              <SmallRow><Icon name="circle3" />3要素相切圆</SmallRow>
            </SmallCol>
            <SmallCol $w={68}>
              <SmallRow><Icon name="slot" />长穴</SmallRow>
              <SmallRow><Icon name="ellipse" />椭圆<CaretGap /><Caret /></SmallRow>
              <SmallRow><Icon name="spline" />样条曲线</SmallRow>
            </SmallCol>
          </GroupBody>
          <GroupLabel>绘制</GroupLabel>
        </Group>

        <Group $w={230}>
          <GroupBody $pad={7}>
            <BigButton $w={42}>
              <BigIconBox><Icon name="trim" size={30} /></BigIconBox>
              <BigLabel>剪切</BigLabel>
            </BigButton>
            <BigButton $w={42}>
              <BigIconBox><Icon name="adjust" size={30} /></BigIconBox>
              <BigLabel>调整</BigLabel>
            </BigButton>
            <IconGrid>
              <Icon name="fillet" /><Icon name="extendLine" />
              <Icon name="chamfer" /><Icon name="splitLine" />
              <Icon name="offset" /><Icon name="overlap" />
            </IconGrid>
            <VSep $ml={4} $mr={2} />
            <BigButton $w={54}>
              <BigIconBox><Icon name="transform" size={30} /></BigIconBox>
              <BigLabel>变换要素</BigLabel>
            </BigButton>
            <SmallCol $w={20}>
              <SmallRow><Icon name="dimPoint" /></SmallRow>
              <SmallRow><Icon name="dimFit" /></SmallRow>
              <SmallRow><Icon name="text" /></SmallRow>
            </SmallCol>
          </GroupBody>
          <GroupLabel>工具</GroupLabel>
        </Group>

        <Group $w={104}>
          <GroupBody $pad={10}>
            <SmallCol $w={92}>
              <SmallRow><Icon name="mirror" />镜像</SmallRow>
              <SmallRow><Icon name="linPattern" />线形草图阵列</SmallRow>
              <SmallRow><Icon name="rotPattern" />草图旋转阵列</SmallRow>
            </SmallCol>
          </GroupBody>
          <GroupLabel>阵列</GroupLabel>
        </Group>

        <Group $w={139}>
          <GroupBody $form $pad={8}>
            <FormRow>
              <FormLabel $w={32}>角度</FormLabel>
              <ValueBox>0 °</ValueBox>
              <OkButton>OK</OkButton>
            </FormRow>
          </GroupBody>
          <GroupLabel>正接的约束条件</GroupLabel>
        </Group>

        <Group $w={160}>
          <GroupBody $form $pad={8}>
            <FormRow>
              <FormLabel $w={54}>最大距离</FormLabel>
              <ValueBox>5 mm</ValueBox>
              <OkButton>OK</OkButton>
            </FormRow>
            <FormRow>
              <FormLabel $w={54} $lh={28}>交差</FormLabel>
              <ValueBox>2.5 mm</ValueBox>
            </FormRow>
          </GroupBody>
          <GroupLabel>一致的约束条件</GroupLabel>
        </Group>

        <Group $w={215}>
          <GroupBody $form $pad={9}>
            <FormRow>
              <FormLabel $w={108}>插入点数</FormLabel>
              <ValueBox $off>0</ValueBox>
              <OkButton $off>OK</OkButton>
            </FormRow>
            <CheckLine><CheckBox />空间均匀分布点</CheckLine>
          </GroupBody>
          <GroupLabel>再创建样条曲线</GroupLabel>
        </Group>

        <Group>
          <GroupBody />
          <GroupLabel />
        </Group>
      </Ribbon>

      <Main>
        <TreePanel>
          <PanelHead>
            树
            <Glyph viewBox="0 0 12 12" $size={12} style={{ marginLeft: 'auto', marginRight: 7, stroke: '#fff' }}><path d="M4 1H9V7H4ZM2 7H10M6 7V11" /></Glyph>
            <Glyph viewBox="0 0 12 12" $size={12} style={{ stroke: '#fff' }}><path d="M2 2L10 10M10 2L2 10" strokeWidth="1.800" /></Glyph>
          </PanelHead>
          <PanelTabs>
            <PanelTab $active $w={38} $ml={1}>
              <Glyph viewBox="0 0 24 24" $size={18}><rect x="1" y="4" width="7" height="6" strokeWidth="1.500" /><path d="M13 7H18M13 7V20H18M13 14H18" strokeWidth="1.500" /><rect x="18" y="4" width="5" height="5" fill="#2f6fb0" stroke="none" /><rect x="18" y="11" width="5" height="5" fill="#4a9a3c" stroke="none" /><rect x="18" y="18" width="5" height="5" fill="#e09a20" stroke="none" /></Glyph>
              <span>树</span>
            </PanelTab>
            <PanelTab $w={50} $ml={7}>
              <Glyph viewBox="0 0 24 24" $size={15}><rect x="3" y="3" width="18" height="13" fill="#dbe7f2" /><path d="M1 21H23" strokeWidth="2" /></Glyph>
              <span>显示</span>
            </PanelTab>
            <PanelTab $w={50}>
              <Glyph viewBox="0 0 24 24" $size={15}><rect x="1" y="5" width="22" height="16" fill="#cfd2d6" /><rect x="11" y="9" width="8" height="8" fill="#5a8fc0" /><circle cx="6" cy="11" r="2" fill="#fff" /></Glyph>
              <span>视点</span>
            </PanelTab>
            <PanelTab $w={50} $ml={1}>
              <Glyph viewBox="0 0 24 24" $size={15} style={{ stroke: '#4fa58a' }}><path d="M6 8C6 2 18 2 18 8C18 12 12 12 12 17V22" strokeWidth="3" /></Glyph>
              <span>帮助</span>
            </PanelTab>
          </PanelTabs>
          <SectionHead $h={26}>特征</SectionHead>
          {FEATURE_ROWS.map(r => <TreeItem key={r.label + r.icon} row={r} />)}
          <TreeRow $pad={3} $dashed>
            <Slot $w={16}><Expander /></Slot>
            <Slot $w={16}><StateDot $off /></Slot>
            <Slot $w={20}><Icon name="sketch" size={16} dim /></Slot>
            <RowLabel $selected>草图3(面片)</RowLabel>
          </TreeRow>
          <SectionHead $mt={47}>模型</SectionHead>
          <TreeRow $pad={0} $bold><DefaultSwatch />默认</TreeRow>
          {MODEL_ROWS.map(r => <ModelItem key={r.label + r.icon} row={r} />)}
        </TreePanel>

        <RightColumn>
          <Canvas>
            <Drawing viewBox="286 150 1634 815" preserveAspectRatio="none">
              <g transform="scale(1.2245)" stroke={PINK} strokeWidth="1.300" fill="none">
                <path d="M233 334Q242 340 252 342L315 344A96.300 96.300 0 0 1 312 536L246 535Q240 535 233 538" />
                <path d="M1568 376L1555 376L1489 374A96.700 96.700 0 0 0 1486 567L1550 569Q1560 572 1568 577" />
                <path d="M1269 122.500Q1329 163.500 1392 122.500" />
                <path d="M290 122Q250 200 233 285" />
                <path d="M1503 122Q1545 210 1568 275" />
                <path d="M1504 789L1538 719Q1555 690 1568 650" />
                <path d="M233 630Q260 720 296 789" />
                <path d="M415 788Q470 745 529 788" />
                {SIDE_NODES.map(([x, y]) => <circle key={x} cx={x} cy={y} r="2.300" fill="#d4087c" stroke="none" />)}
              </g>
              <g transform="translate(750 210) scale(.4528)">
                <path d={GEAR} stroke={PINK} strokeWidth="3" fill="none" />
                {GEAR_NODES.map(([x, y]) => <circle key={x + '-' + y} cx={x} cy={y} r="6" fill="#d4087c" />)}
                <path d="M777 548V768" stroke="#58c858" strokeWidth="4" />
                <path d="M777 768H998" stroke="#e06464" strokeWidth="4" />
                <circle cx="777" cy="768" r="6" fill="#444" />
                <text x="777" y="525" textAnchor="middle" fontSize="30" fill="#58c858" fontFamily="Liberation Sans">V</text>
                <text x="1027" y="781" textAnchor="middle" fontSize="32" fill="#e06464" fontFamily="Liberation Sans">U</text>
                <text x="784" y="768" fontSize="26" fill="#fff" fontFamily="Noto Sans CJK SC">组1</text>
                <path d={SLOT} stroke="#1010d8" strokeWidth="4.500" fill="none" />
                {SLOT_GREEN.map(([x, y]) => <circle key={x} cx={x} cy={y} r="6" fill="#8cf08c" />)}
                {SLOT_BLUE.map(([x, y]) => <circle key={x} cx={x} cy={y} r="6" fill="#1010d8" />)}
                <path d="M538 1273L578 1345M718 1332L625 1368" stroke="#111" strokeWidth="2.500" />
                <path d="M564 1325L579 1343L568 1346Z" fill="#111" />
                <path d="M655 1355L634 1369L650 1366Z" fill="#111" stroke="#111" strokeWidth="3" />
                <text transform="translate(552 1222) rotate(66)" fontSize="23" fill="#333" fontFamily="Liberation Sans">0.5 mm</text>
                <text transform="translate(668 1310) rotate(-22)" fontSize="23" fill="#333" fontFamily="Liberation Sans">0.5 mm</text>
              </g>
              <path d="M324 902V927" stroke="#7fb58a" strokeWidth="1" />
              <path d="M324 927H340" stroke="#c47a7a" strokeWidth="1" />
              <path d="M324 927L320 933" stroke="#7a8ac4" strokeWidth="1" />
              <text x="320" y="934" fontSize="12" fill="#7a80b0" fontFamily="Liberation Sans">Z</text>
              <text x="343" y="932" fontSize="12" fill="#b88a8a" fontFamily="Liberation Sans">X</text>
              <rect x="304" y="943" width="84" height="4" fill="#fff" stroke="#222" strokeWidth="1" />
              <rect x="304" y="947" width="84" height="4" fill="#333" />
              <text x="391" y="949" fontSize="11" fill="#333" fontFamily="Liberation Mono">2.5 mm</text>
            </Drawing>
            <ViewBar>
              <Tool name="region" w={28} size={22} /><ToolCaret />
              <Tool name="solid" w={28} size={22} /><ToolCaret />
              <Tool name="revolve" w={28} size={22} /><ToolCaret />
              <ToolSep $w={6} />
              <Tool name="frontBox" w={28} size={21} /><ToolCaret />
              <Tool name="rotL" />
              <Tool name="rotR" />
              <Tool name="split" />
              <Tool name="lift" />
              <ToolSep />
              <Tool name="line" dim />
              <Tool name="dashRect" on />
              <Tool name="dashCircle" dim />
              <Tool name="dashHex" dim />
              <Tool name="dashBlob" dim />
              <Tool name="dashCursor" dim />
              <Tool name="dashPen" dim />
              <Tool name="bucket" dim />
              <Tool name="person" dim />
              <Tool name="eyeBox" dim />
            </ViewBar>
            <CornerMark />
            <ExitGroup>
              <ExitButton>
                <Glyph viewBox="0 0 28 24" $size={28}>
                  <path d="M22 6V3H4V21H22V18" stroke="#fff" strokeWidth="3.500" />
                  <path d="M11 9.500H18V6L25 12L18 18V14.500H11Z" fill="#fff" stroke="none" />
                </Glyph>
              </ExitButton>
              <ExitButton>
                <Glyph viewBox="0 0 24 24" $size={28}><path d="M3 3L21 21M21 3L3 21" stroke="#fff" strokeWidth="4.500" /></Glyph>
              </ExitButton>
            </ExitGroup>
            <Bubbles>
              <Bubble /><Bubble /><Bubble /><Bubble /><Bubble />
            </Bubbles>
          </Canvas>
          <ViewStrip>
            <ViewTab $w={76} $bg="#cfe2f8">模型视图</ViewTab>
            <ViewTab $w={56} $ml={-11} $bg="#fdf08a">支持</ViewTab>
            <StripRight>
              <Glyph viewBox="0 0 12 12" $size={10} style={{ marginRight: 7 }}><path d="M3 1L9 6L3 11Z" stroke="#888" strokeWidth="1" /></Glyph>
              <Glyph viewBox="0 0 12 12" $size={10} style={{ marginRight: 5 }}><path d="M2 2L10 10M10 2L2 10" stroke="#666" strokeWidth="1.200" /></Glyph>
              <StripBox>
                <Glyph viewBox="0 0 12 12" $size={10}><path d="M1 4H6V1L11 6L6 11V8H1Z" fill="#222" stroke="none" /></Glyph>
              </StripBox>
              <StripBox>
                <Glyph viewBox="0 0 12 12" $size={10}><path d="M1 3H11L6 9Z" fill="#222" stroke="none" /></Glyph>
              </StripBox>
            </StripRight>
          </ViewStrip>
        </RightColumn>
      </Main>

      <BottomBar>
        <Grip />
        <ToolSlot $w={22}><Icon name="cropTool" size={20} /></ToolSlot>
        <Combo>自动<Caret $grey /></Combo>
        <Combo>自动<Caret $grey /></Combo>
        <Grip $w={10} style={{ marginLeft: 4 }} />
        <Tool name="mesh" vis />
        <Tool name="region" vis />
        <Tool name="refPoint" vis on />
        <Tool name="bucket" vis on />
        <Tool name="solid" vis />
        <Tool name="sketch" vis on />
        <Tool name="sketch" vis on />
        <Tool name="refPoint" vis on />
        <Tool name="refLine" vis on />
        <Tool name="plane" vis />
        <Tool name="spline" vis />
        <Tool name="origin" vis />
        <Tool name="measure" vis />
        <Grip $w={24} />
        <Tool name="cap" dim />
        <Tool name="cap" dim />
        <Tool name="cap" dim />
        <Tool name="mesh" dim />
        <Tool name="mesh" dim />
        <Tool name="cap" dim />
        <Tool name="cap" dim />
        <Tool name="solid" dim />
        <Tool name="frontBox" />
        <Tool name="frontBox" />
        <Tool name="plane" />
        <Tool name="sketch" dim />
        <Tool name="dimCursor" />
        <ToolSep $w={6} />
        <Tool name="pasteDoc" w={28} dim />
        <ToolCaret />
        <Grip />
        <Tool name="measure" />
        <Tool name="measureAngle" />
        <Tool name="measureDev" />
        <Tool name="measureSec" dim />
        <Tool name="mesh" dim />
        <ToolCaret />
      </BottomBar>

      <StatusBar>准备</StatusBar>

      <Taskbar>
        <TaskSlot $w={50}>
          <Glyph viewBox="0 0 24 24" $size={20}><path d="M1 4L10 3V11H1ZM12 2.700L23 1V11H12ZM1 13H10V21L1 20ZM12 13H23V23L12 21.300Z" fill="#fff" stroke="none" /></Glyph>
        </TaskSlot>
        <TaskSlot $run>
          <TaskIcon viewBox="0 0 24 24"><circle cx="12" cy="13" r="10" fill="#7ccb3c" /><circle cx="12" cy="13" r="6" fill="#fff" /><path d="M7 13H17" stroke="#7ccb3c" strokeWidth="2" /></TaskIcon>
        </TaskSlot>
        <TaskSlot>
          <TaskIcon viewBox="0 0 24 24"><path d="M3 2H9L12 9V23H3Z" fill="#e0202c" /><path d="M21 2H15L12 9V23H21Z" fill="#7d8a90" /></TaskIcon>
        </TaskSlot>
        <TaskSlot><TaskLetter bg="#f6e8e0" fg="#c22e34" txt="A" size={20} /></TaskSlot>
        <TaskSlot>
          <TaskIcon viewBox="0 0 24 24"><circle cx="12" cy="13" r="9" fill="#2f7fd8" /><path d="M3 18C8 22 20 18 22 7" stroke="#f0c030" strokeWidth="2" fill="none" /><path d="M7 1L17 3L12 11Z" fill="#e0202c" /></TaskIcon>
        </TaskSlot>
        <TaskSlot><TaskLetter bg="#b0181f" fg="#fff" txt="DX" size={14} /></TaskSlot>
        <TaskSlot>
          <TaskIcon viewBox="0 0 24 24"><path d="M20 6A9.500 9.500 0 1 0 20 18" stroke="#1b8fd8" strokeWidth="6" fill="none" /></TaskIcon>
        </TaskSlot>
        <TaskSlot>
          <TaskIcon viewBox="0 0 24 24"><path d="M12 1L4 12L12 23L20 12Z" fill="#1a1d22" stroke="#666" /><path d="M14 5L9 13H13L10 20L16 11H12Z" fill="#3fa0e8" /></TaskIcon>
        </TaskSlot>
        <TaskSlot>
          <TaskIcon viewBox="0 0 24 24"><rect x="1" y="3" width="22" height="20" fill="#2f6a9e" /><circle cx="14" cy="8" r="7" fill="#bcd5ea" /><text x="13" y="21" fontSize="8" fontWeight="700" fill="#fff" fontFamily="Liberation Sans">V7</text></TaskIcon>
        </TaskSlot>
        <TaskSlot>
          <TaskIcon viewBox="0 0 24 24"><rect x="3" y="3" width="18" height="18" fill="#efe8d8" /><path d="M5 18L12 6L19 12L12 19Z" fill="#d86a30" /><path d="M5 18L10 13L13 19Z" fill="#6a9a48" /></TaskIcon>
        </TaskSlot>
        <TaskSlot><TaskLetter bg="#001e36" fg="#31a8ff" txt="Ps" border="#31a8ff" /></TaskSlot>
        <TaskSlot><TaskLetter bg="#1f0f3a" fg="#c9a0ff" txt="Ae" border="#a77bee" /></TaskSlot>
        <TaskSlot><TaskLetter bg="#2a0a3a" fg="#d98cff" txt="Pr" border="#b060e8" /></TaskSlot>
        <TaskSlot>
          <TaskIcon viewBox="0 0 24 24"><path d="M3 16L19 6L22 9L8 19Z" fill="#8c9296" /><path d="M1 17L8 20L22 12V15L8 23L1 20Z" fill="#4c5054" /></TaskIcon>
        </TaskSlot>
        <TaskSlot $active $run><TaskLetter bg="#b0181f" fg="#fff" txt="DX" size={14} /></TaskSlot>
        <TaskSlot $run>
          <TaskIcon viewBox="0 0 24 24"><rect x="1" y="1" width="22" height="22" rx="5" fill="#1485f0" /><circle cx="12" cy="12" r="8" fill="none" stroke="#fff" strokeWidth="2" /><text x="12" y="16" textAnchor="middle" fontSize="11" fontWeight="700" fill="#fff" fontFamily="Liberation Sans">K</text></TaskIcon>
        </TaskSlot>
        <Tray>
          <TrayCell />
          <TrayCell $w={19} />
          <TrayCell><Glyph viewBox="0 0 24 24" $size={14}><path d="M3 16L12 7L21 16" stroke="#fff" strokeWidth="1.800" /></Glyph></TrayCell>
          <TrayCell>
            <TaskIcon viewBox="0 0 24 24" style={{ width: 17, height: 17 }}><circle cx="12" cy="12" r="11" fill="#fff" /><circle cx="12" cy="12" r="7" fill="#1f4fa8" /></TaskIcon>
          </TrayCell>
          <TrayCell>
            <TaskIcon viewBox="0 0 24 24" style={{ width: 17, height: 17 }}><circle cx="12" cy="12" r="11" fill="#b8c820" /><rect x="9" y="10" width="11" height="10" fill="#d8a020" /></TaskIcon>
          </TrayCell>
          <TrayCell>
            <Glyph viewBox="0 0 24 24" $size={18}><path d="M6 3H22V15H4M12 15V21M6 21H18M1 3H8V9H1Z" stroke="#fff" strokeWidth="1.300" /></Glyph>
          </TrayCell>
          <TrayCell>
            <Glyph viewBox="0 0 24 24" $size={18}><path d="M3 9H7L13 4V20L7 15H3ZM16 8C18 10 18 14 16 16M19 5C22 9 22 15 19 19" stroke="#fff" strokeWidth="1.100" /></Glyph>
          </TrayCell>
          <Clock>
            <div>11:28</div>
            <div>2019/9/26</div>
          </Clock>
          <TrayCell $w={42}>
            <Glyph viewBox="0 0 24 24" $size={18}><path d="M1 2H23V18H15L12 22L9 18H1Z" stroke="#fff" strokeWidth="1.400" /></Glyph>
          </TrayCell>
        </Tray>
      </Taskbar>

      <Caption>你的泪光柔弱中带伤</Caption>
      <Badge>30</Badge>

      <WatermarkLogo viewBox="0 0 72 82">
        <path d="M36 0L72 20V62L36 82L0 62V20Z" fill="#7ec4ea" />
        <path d="M36 24L56 35V57L36 68L16 57V35Z" fill="#6b9fc0" stroke="#e8f4fb" strokeWidth="3" />
        <path d="M0 62L36 82L72 62V48L36 68L8 52Z" fill="#0f6a9a" />
      </WatermarkLogo>
      <WatermarkTitle>3D世界网</WatermarkTitle>
      <ImeBar>
        <ImeCell>中</ImeCell>
        <ImeCell style={{ fontWeight: 700 }}>°,</ImeCell>
        <ImeCell>
          <Glyph viewBox="0 0 24 24" $size={18} style={{ stroke: '#1f78c8' }}><circle cx="12" cy="12" r="10" /><path d="M7 14C9 18 15 18 17 14M8 9V10M16 9V10" /></Glyph>
        </ImeCell>
        <ImeCell>
          <Glyph viewBox="0 0 24 24" $size={18}><rect x="8" y="1" width="8" height="15" rx="4" fill="#1f78c8" stroke="none" /><path d="M4 11C4 21 20 21 20 11M12 19V23M7 23H17" stroke="#1f78c8" /></Glyph>
        </ImeCell>
        <ImeCell>
          <Glyph viewBox="0 0 24 24" $size={18}><rect x="1" y="4" width="22" height="16" rx="2" fill="#1f78c8" stroke="none" /><path d="M4 8H20M4 12H20M7 16H17" stroke="#fff" strokeDasharray="2 1.500" /></Glyph>
        </ImeCell>
        <ImeCell>
          <Glyph viewBox="0 0 24 24" $size={18}><circle cx="10" cy="7" r="5" fill="#c6ccd2" stroke="none" /><path d="M2 22C2 12 18 12 18 22Z" fill="#c6ccd2" stroke="none" /><rect x="14" y="15" width="8" height="7" fill="#fff" strokeWidth="1.200" /></Glyph>
        </ImeCell>
        <ImeCell>
          <Glyph viewBox="0 0 24 24" $size={18}><path d="M7 2L1 7L4 11L7 9V22H17V9L20 11L23 7L17 2L12 5Z" fill="#3a8fc8" stroke="none" /></Glyph>
        </ImeCell>
        <ImeCell>
          <Glyph viewBox="0 0 24 24" $size={16}><path d="M2 2H11V11H2ZM13 2H22V11H13ZM2 13H11V22H2ZM13 13H22V22H13Z" fill="#1f78c8" stroke="none" /></Glyph>
        </ImeCell>
      </ImeBar>
      <SogouMark $x={1717} $y={1017} $s={21}>S</SogouMark>
      <SogouMark $x={1635} $y={1050} $s={15}>S</SogouMark>
      <WatermarkUrl>WWW.3DSW.COM</WatermarkUrl>
    </Window>
  );
}
